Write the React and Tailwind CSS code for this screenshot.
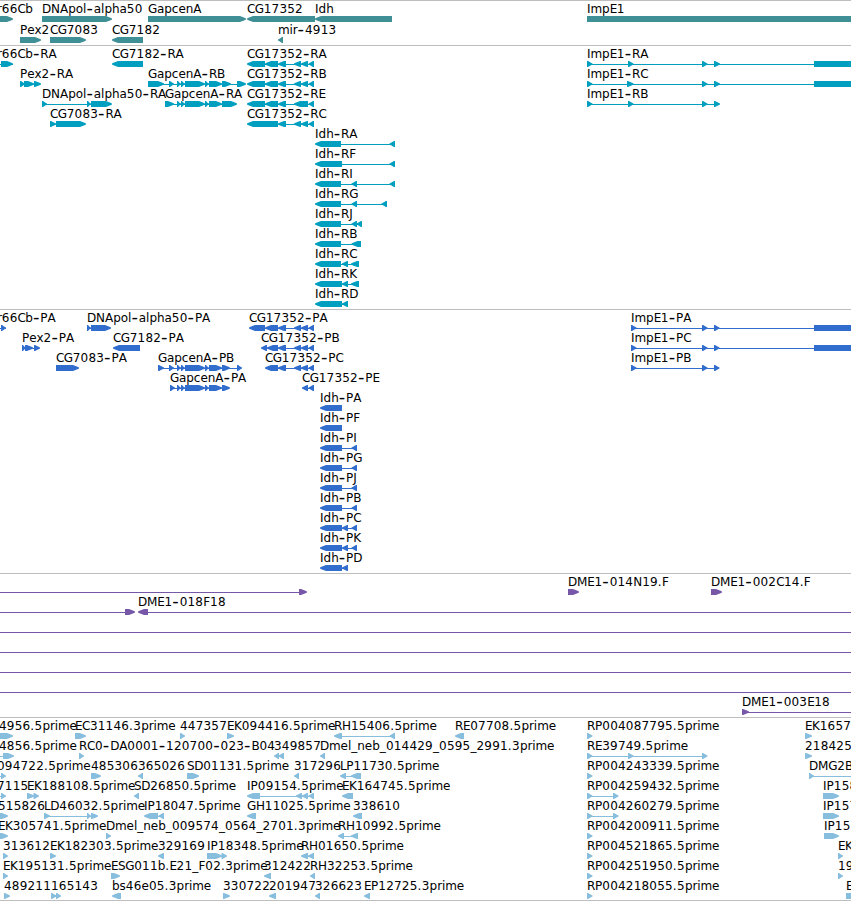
import React from 'react'

// exons are [start, end] pairs in canvas pixels, dir is the strand
// a feature may also have `line` (extent of the connector) and `lx` (label start)
const f = (name, dir, exons, extra = {}) => ({ name, dir, exons, ...extra })

const genes = [
  [
    f('r66Cb', 1, [[-20, 13]], { lx: -3 }),
    f('DNApol-alpha50', 1, [[42, 112]]),
    f('GapcenA', 1, [[148, 246]]),
    f('CG17352', -1, [[247, 315]]),
    f('Idh', -1, [[315, 392]]),
    f('ImpE1', 1, [[587, 900]]),
  ],
  [
    f('Pex2', 1, [[20, 41]]),
    f('CG7083', 1, [[50, 86]]),
    f('CG7182', -1, [[112, 143]]),
    f('mir-4913', -1, [[278, 283]]),
  ],
]

const cgTail = [[278, 286], [294, 301], [301, 308], [308.5, 314]]
const gapMid = [[177, 181], [181, 185], [185, 205], [205, 209], [209, 222]]

const transcripts = [
  [
    f('r66Cb-RA', 1, [[1, 13]], { lx: -3, line: [-10, 13] }),
    f('CG7182-RA', -1, [[112, 143]]),
    f('CG17352-RA', -1, [[247, 265], [265, 278], ...cgTail]),
    f('ImpE1-RA', 1, [[587, 592.5], [628, 633.5], [702, 707.5], [714, 720], [814, 900]]),
  ],
  [
    f('Pex2-RA', 1, [[20, 25], [24, 34], [34, 41]]),
    f('GapcenA-RB', 1, [[148, 164], [169, 174], ...gapMid, [222, 231], [237, 246]]),
    f('CG17352-RB', -1, [[247, 265], [265, 278], ...cgTail]),
    f('ImpE1-RC', 1, [[587, 592.5], [627, 633.5], [702, 707.5], [714, 720], [814, 900]]),
  ],
  [
    f('DNApol-alpha50-RA', 1, [[42, 47], [87, 91], [91, 112]]),
    f('GapcenA-RA', 1, [[165, 174], ...gapMid, [222, 237]]),
    f('CG17352-RE', -1, [[247, 265], [265, 278], [278, 286], [294, 308], [308.5, 314]]),
    f('ImpE1-RB', 1, [[587, 592.5], [628, 633.5], [702, 707.5], [714, 720]]),
  ],
  [
    f('CG7083-RA', 1, [[50, 56], [56, 86]]),
    f('CG17352-RC', -1, [[247, 278], ...cgTail]),
  ],
  [f('Idh-RA', -1, [[315, 341], [389.5, 395]])],
  [f('Idh-RF', -1, [[315, 342], [389.5, 395]])],
  [f('Idh-RI', -1, [[315, 341], [351.5, 357], [389.5, 395]])],
  [f('Idh-RG', -1, [[315, 341], [351.5, 357], [381.5, 387]])],
  [f('Idh-RJ', -1, [[315, 341], [351.5, 357], [356.5, 362]])],
  [f('Idh-RB', -1, [[315, 341], [351.5, 361]])],
  [f('Idh-RC', -1, [[315, 341], [342, 348], [351, 359]])],
  [f('Idh-RK', -1, [[315, 342], [342, 348], [351, 359]])],
  [f('Idh-RD', -1, [[315, 342], [342, 348]])],
]

const proteins = [
  [
    f('r66Cb-PA', 1, [[1, 6]], { lx: -3, line: [-10, 6] }),
    f('DNApol-alpha50-PA', 1, [[87, 91], [91, 111]]),
    f('CG17352-PA', -1, [[249, 265], [265, 278], ...cgTail]),
    f('ImpE1-PA', 1, [[631, 636.5], [702, 707.5], [714, 719.5], [814, 900]]),
  ],
  [
    f('Pex2-PA', 1, [[22, 26], [25, 33], [34, 40]]),
    f('CG7182-PA', -1, [[113, 140]]),
    f('CG17352-PB', -1, [[261, 267], [267, 278], ...cgTail]),
    f('ImpE1-PC', 1, [[631, 636.5], [702, 707.5], [714, 719.5], [814, 900]]),
  ],
  [
    f('CG7083-PA', 1, [[56, 79]]),
    f('GapcenA-PB', 1, [[158, 164], [169, 174], ...gapMid, [222, 230], [237, 242]]),
    f('CG17352-PC', -1, [[265, 278], ...cgTail]),
    f('ImpE1-PB', 1, [[631, 636.5], [702, 707.5], [714, 719.5]]),
  ],
  [
    f('GapcenA-PA', 1, [[170, 175], ...gapMid, [222, 230]]),
    f('CG17352-PE', -1, [[302, 308], [308.5, 314]]),
  ],
  [f('Idh-PA', -1, [[320, 342]])],
  [f('Idh-PF', -1, [[320, 342]])],
  [f('Idh-PI', -1, [[320, 342], [351.5, 357]])],
  [f('Idh-PG', -1, [[320, 342], [351.5, 357]])],
  [f('Idh-PJ', -1, [[320, 342], [351.5, 357]])],
  [f('Idh-PB', -1, [[320, 342], [351.5, 357]])],
  [f('Idh-PC', -1, [[320, 342], [342, 348], [351.5, 357]])],
  [f('Idh-PK', -1, [[320, 342], [342, 348], [351.5, 357]])],
  [f('Idh-PD', -1, [[320, 342], [342, 348]])],
]

const across = () => f('', 1, [], { line: [-10, 900] })

const clones = [
  [
    f('', 1, [[299, 307]], { line: [-10, 300] }),
    f('DME1-014N19.F', 1, [[568, 579]]),
    f('DME1-002C14.F', 1, [[711, 722]]),
  ],
  [
    f('', 1, [[125, 135]], { line: [-10, 126] }),
    f('DME1-018F18', -1, [[138, 148]], { line: [147, 900] }),
  ],
  [across()],
  [across()],
  [across()],
  [across()],
  [f('DME1-003E18', 1, [[742, 749]], { line: [743, 900] })],
]

const ests = [
  [
    f('4956.5prime', 1, [[-3, 13]], { lx: -1 }),
    f('EC31146.3prime', 1, [[75, 86]]),
    f('447357', 1, [[180, 185]]),
    f('EK094416.5prime', 1, [[227, 234]]),
    f('RH15406.5prime', -1, [[334, 342], [389.5, 395]]),
    f('RE07708.5prime', -1, [[455, 464]]),
    f('RP004087795.5prime', 1, [[587, 592.5]]),
    f('EK1657', 1, [[805, 812]]),
  ],
  [
    f('4856.5prime', 1, [[3, 14]], { lx: -1, line: [-10, 4] }),
    f('RC0-DA0001-120700-023-B04', 1, [[79, 84]]),
    f('349857', -1, [[274, 279], [278.5, 284]]),
    f('Dmel_neb_014429_0595_2991.3prime', -1, [[320, 325]]),
    f('RE39749.5prime', 1, [[587, 592.5], [628, 633.5], [702, 707.5]]),
    f('218425', 1, [[805, 812]]),
  ],
  [
    f('094722.5prime', 1, [[1, 6]], { lx: -3, line: [-10, 2] }),
    f('485306', 1, [[91, 101]]),
    f('365026', -1, [[138, 143]]),
    f('SD01131.5prime', 1, [[187, 199]]),
    f('317296', -1, [[294, 299]]),
    f('LP11730.5prime', -1, [[340, 346], [351, 361]]),
    f('RP004243339.5prime', 1, [[587, 592.5]]),
    f('DMG2B', 1, [[809, 814]], { line: [810, 900] }),
  ],
  [
    f('7115', 1, [[1, 6]], { lx: -3, line: [-10, 2] }),
    f('EK188108.5prime', 1, [[27, 34], [33.5, 39]]),
    f('SD26850.5prime', -1, [[134, 139]]),
    f('IP09154.5prime', -1, [[247, 260], [296, 302], [302, 308], [308.5, 314]]),
    f('EK164745.5prime', -1, [[342, 353]]),
    f('RP004259432.5prime', 1, [[587, 592.5], [613, 618.5]]),
    f('IP158', 1, [[823, 839]]),
  ],
  [
    f('515826', 1, [[-2, 8]], { lx: -2 }),
    f('LD46032.5prime', 1, [[44, 50], [87, 91], [91, 98]]),
    f('IP18047.5prime', -1, [[144, 158], [158.5, 164]]),
    f('GH11025.5prime', -1, [[247, 256]]),
    f('338610', -1, [[353, 362]]),
    f('RP004260279.5prime', 1, [[587, 592.5], [613, 618.5]]),
    f('IP157', 1, [[823, 839]]),
  ],
  [
    f('EK305741.5prime', 1, [[-2, 8]], { lx: -2 }),
    f('Dmel_neb_009574_0564_2701.3prime', 1, [[106, 111]]),
    f('RH10992.5prime', -1, [[338, 344], [351, 358]]),
    f('RP004200911.5prime', 1, [[587, 592.5]]),
    f('IP15', 1, [[824, 839]]),
  ],
  [
    f('313612', 1, [[3, 8]]),
    f('EK182303.5prime', 1, [[50, 56]]),
    f('329169', -1, [[158, 164]]),
    f('IP18348.5prime', 1, [[207, 222], [221.5, 227]]),
    f('RH01650.5prime', -1, [[301, 308], [308, 314]]),
    f('RP004521865.5prime', 1, [[587, 592.5]]),
    f('EK', 1, [[838, 843]]),
  ],
  [
    f('EK195131.5prime', 1, [[3, 8]]),
    f('ESG011b.E21_F02.3prime', 1, [[111, 120]]),
    f('312422', -1, [[264, 271]]),
    f('RH32253.5prime', -1, [[310, 315]]),
    f('RP004251950.5prime', 1, [[587, 592.5]]),
    f('19', 1, [[838, 843]]),
  ],
  [
    f('489211', 1, [[4, 10]]),
    f('165143', 1, [[51, 56.5], [56, 61]]),
    f('bs46e05.3prime', -1, [[112, 121]]),
    f('330722', 1, [[223, 230]]),
    f('201947', -1, [[269, 276]]),
    f('326623', -1, [[315, 320]]),
    f('EP12725.3prime', -1, [[364, 370]]),
    f('RP004218055.5prime', 1, [[587, 592.5]]),
    f('E', 1, [[846, 900]]),
  ],
]

// advance widths of the label font, digits are the default
const ADVANCE = {
  A: 8.2, B: 8, C: 7.8, D: 9, E: 7.1, F: 6.9, G: 8.9, H: 8.9, I: 3.6, K: 7.6, L: 6.3,
  M: 10.3, N: 9, P: 7.2, R: 8.1, S: 7.2, J: 3.6,
  a: 7.3, b: 7.6, c: 6.6, d: 7.6, e: 7.4, h: 7.5, i: 3.3, l: 3.3, m: 11.5, n: 7.5, o: 7.3,
  p: 7.6, r: 4.8, s: 6.2, x: 7, '-': 7.4, '.': 4.2, _: 6.1,
}

const charPositions = (text, start) => {
  let x = start
  return text
    .split('')
    .map((ch) => {
      const at = x
      x += ADVANCE[ch] || 7.84
      return at.toFixed(2)
    })
    .join(' ')
}

// hyphens are set larger, so they drop a little and the next char comes back up
const charShifts = (text) =>
  text
    .split('')
    .map((ch, i) => (ch === '-' ? 1.3 : text[i - 1] === '-' ? -1.3 : 0))
    .join(' ')

const Label = ({ name, x }) => (
  <text x={charPositions(name, x)} y={12} dy={charShifts(name)} className="fill-black">
    {name.split(/(-)/).map((part, i) =>
      part === '-' ? (
        <tspan key={i} className="text-[18px]">
          -
        </tspan>
      ) : (
        part
      )
    )}
  </text>
)

const Exon = ({ dir, x1, x2 }) => {
  const tip = Math.min(x2 - x1 - 1, 6)
  const end = dir > 0 ? x2 : x1
  const tail = dir > 0 ? x1 : x2
  const neck = end - dir * tip
  const nose = end - dir * 1.5
  const points = `${tail},15 ${neck},15 ${nose},16.8 ${end},17.4 ${end},18.6 ${nose},19.2 ${neck},21 ${tail},21`
  return <polygon points={points} />
}

const Feature = ({ feature }) => {
  const { name, dir, exons, lx } = feature
  const line =
    feature.line || (exons.length > 1 ? [exons[0][0] + 1, exons[exons.length - 1][1] - 1] : null)
  return (
    <g>
      {line && <rect x={line[0]} y={18} width={line[1] - line[0]} height={1} />}
      {exons.map(([x1, x2], i) => (
        <Exon key={i} dir={dir} x1={x1} x2={x2} />
      ))}
      {name && <Label name={name} x={lx ?? exons[0][0]} />}
    </g>
  )
}

const Track = ({ rows, color, height, rowHeight = 'h-5' }) => (
  <section className={`shrink-0 border-t border-[#bebebe] ${height} ${color}`}>
    {rows.map((row, i) => (
      <svg
        key={i}
        className={`block w-full overflow-visible fill-current font-['DejaVu_Sans',sans-serif] text-[12px] ${rowHeight}`}
      >
        {row.map((feature, j) => (
          <Feature key={j} feature={feature} />
        ))}
      </svg>
    ))}
  </section>
)

const App = () => (
  <main className="flex h-[901px] w-[851px] flex-col overflow-hidden border-b border-[#bebebe] bg-white">
    {/* Genes */}
    <Track rows={genes} color="text-[#3f8f96]" height="h-[45px]" rowHeight="h-[21px]" />
    {/* Transcripts */}
    <Track rows={transcripts} color="text-[#009fbf]" height="h-[264px]" />
    {/* Proteins */}
    <Track rows={proteins} color="text-[#316dcd]" height="h-[264px]" />
    {/* Clones */}
    <Track rows={clones} color="text-[#7757a8]" height="h-[144px]" />
    {/* ESTs */}
    <Track rows={ests} color="text-[#87bddd]" height="h-[183px]" />
  </main>
)

export default App
